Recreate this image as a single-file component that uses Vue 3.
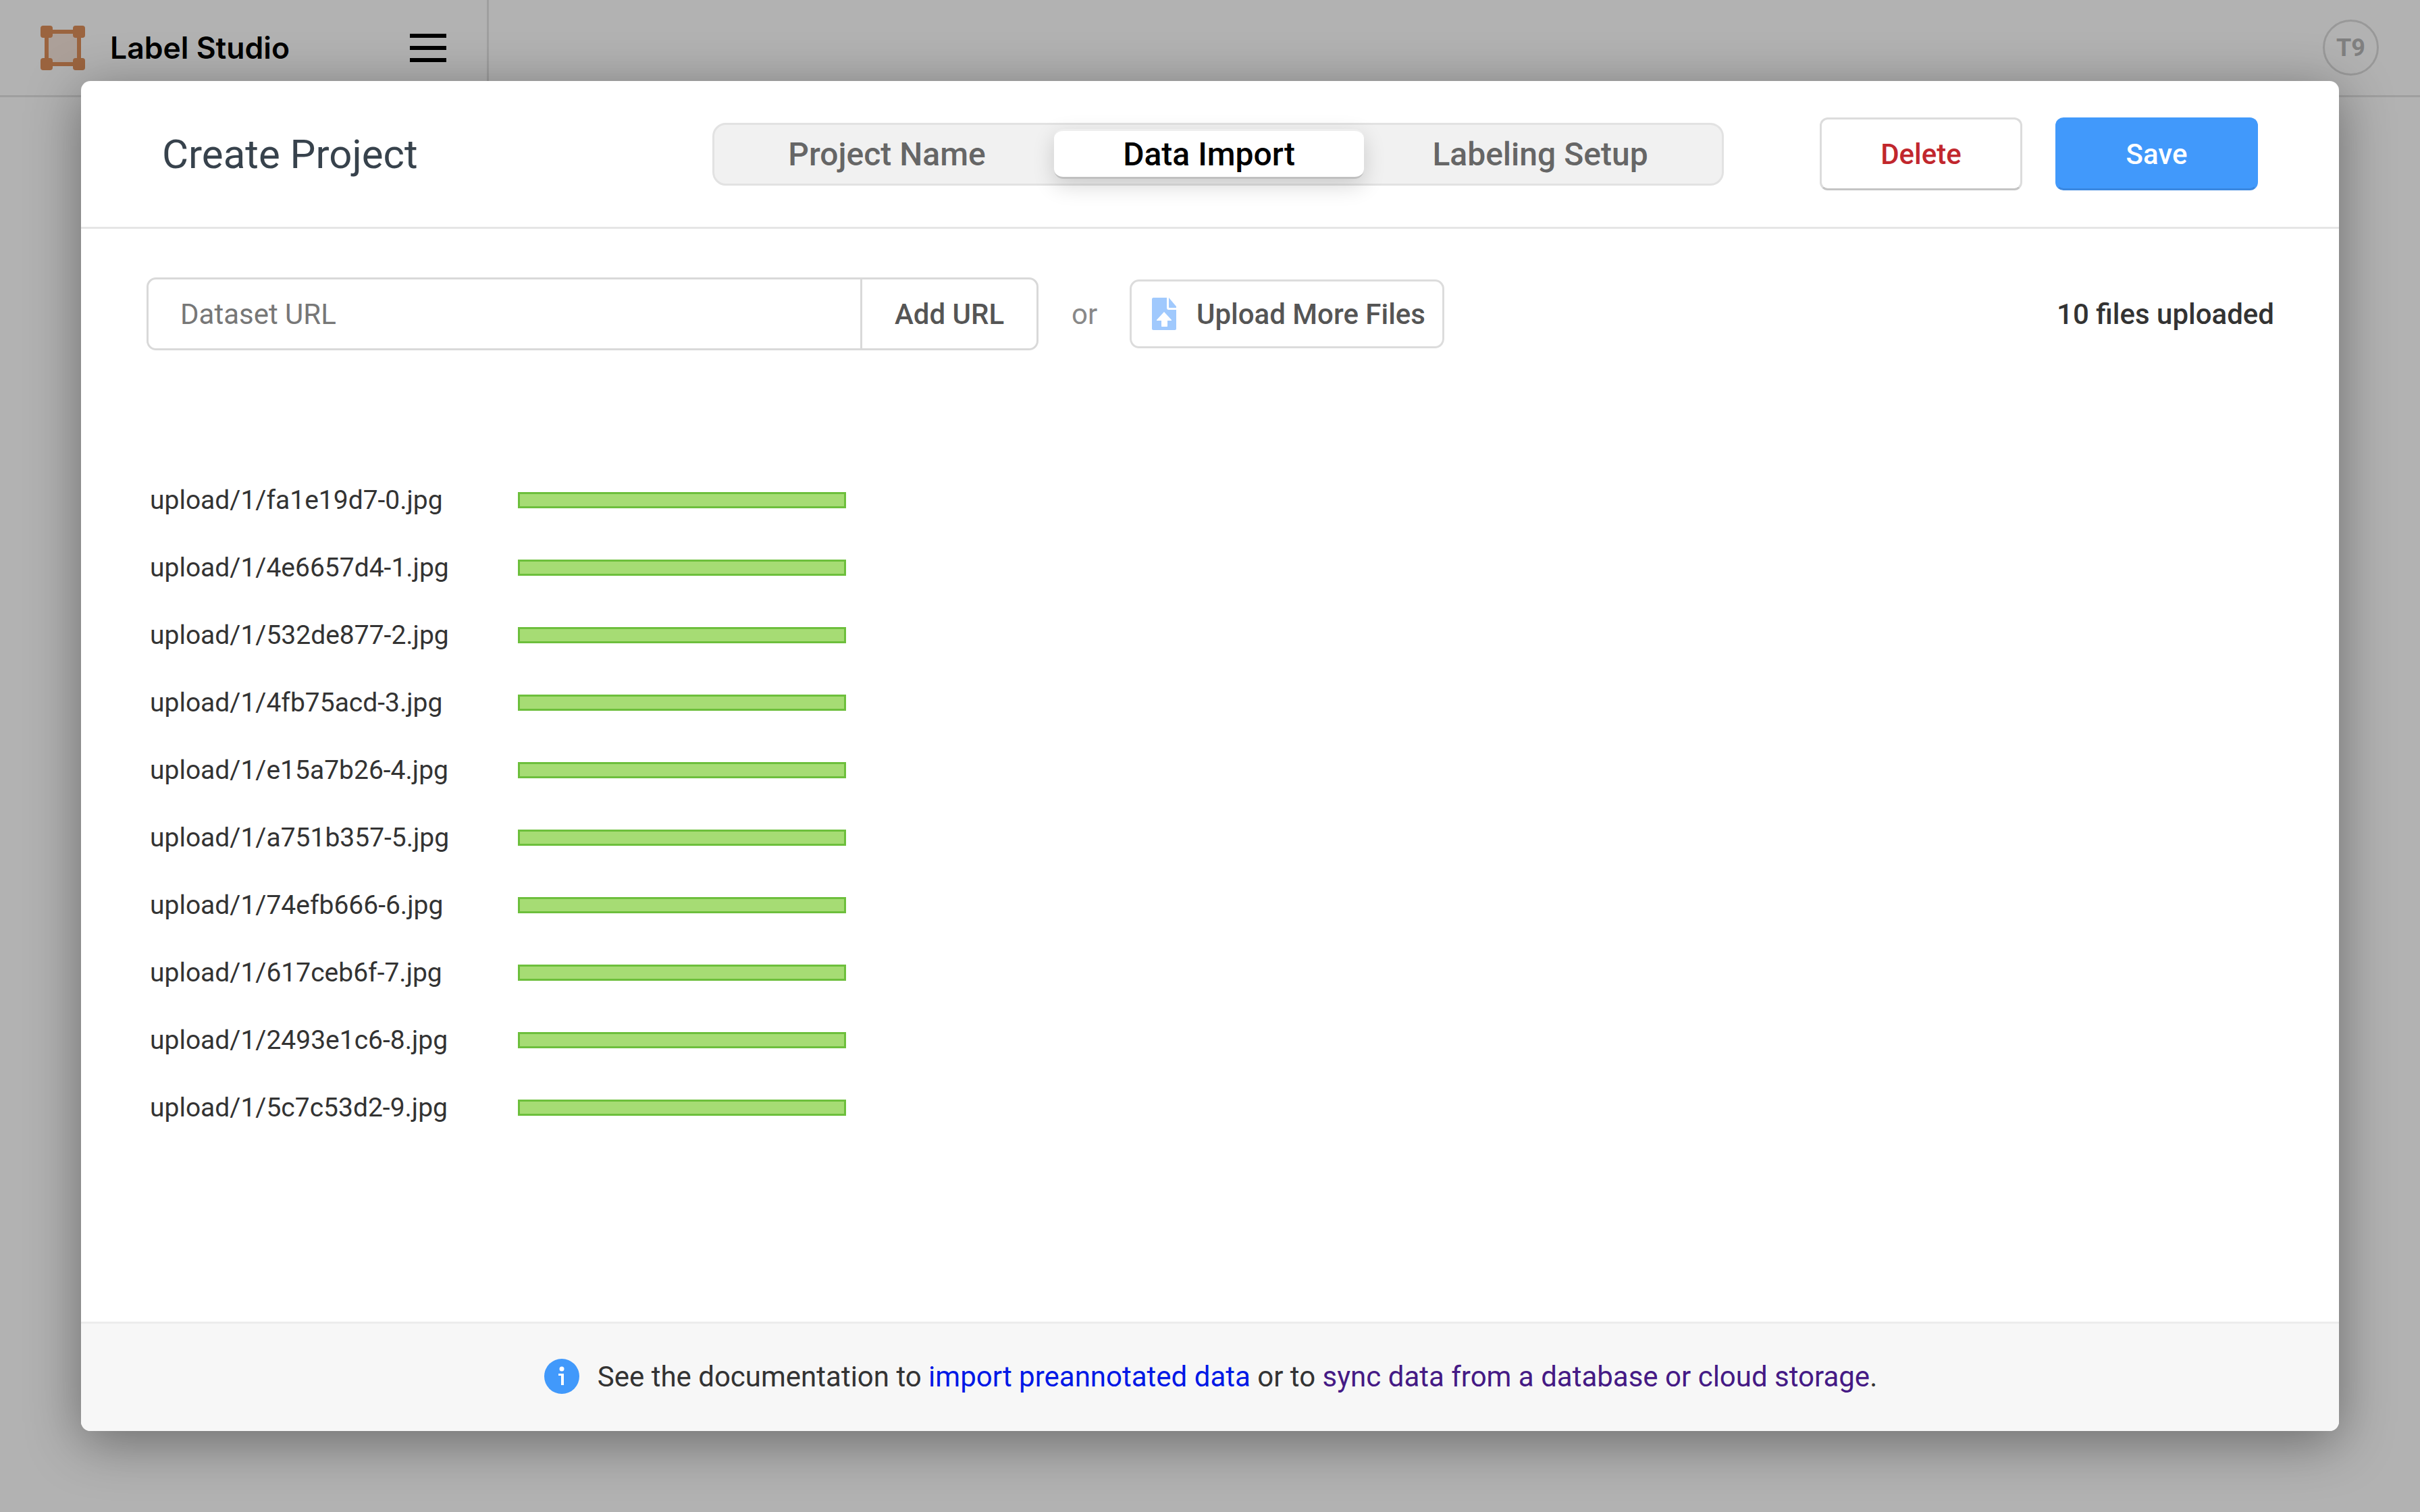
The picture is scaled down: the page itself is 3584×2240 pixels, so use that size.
<template>
  <div class="app">
    <header class="topbar">
      <div class="brand">
        <svg class="logo" viewBox="0 0 66 66" width="66" height="66">
          <rect x="9" y="9" width="48" height="48" fill="#f7e5dc" stroke="#df905b" stroke-width="6" />
          <rect x="0" y="0" width="18" height="18" rx="4" fill="#df905b" />
          <rect x="48" y="0" width="18" height="18" rx="4" fill="#df905b" />
          <rect x="0" y="48" width="18" height="18" rx="4" fill="#df905b" />
          <rect x="48" y="48" width="18" height="18" rx="4" fill="#df905b" />
        </svg>
        <span class="brand-name">Label Studio</span>
        <button class="menu-btn">
          <span></span><span></span><span></span>
        </button>
      </div>
      <div class="avatar">T9</div>
    </header>

    <div class="overlay">
      <div class="modal">
        <div class="modal-head">
          <h1>Create Project</h1>
          <div class="tabs">
            <div v-for="t in tabs" :key="t" class="tab" :class="{ active: t === 'Data Import' }">{{ t }}</div>
          </div>
          <div class="actions">
            <button class="btn">Delete</button>
            <button class="btn primary">Save</button>
          </div>
        </div>

        <div class="modal-body">
          <div class="import-bar">
            <div class="url-form">
              <div class="url-input">Dataset URL</div>
              <div class="url-add">Add URL</div>
            </div>
            <span class="or">or</span>
            <button class="upload-btn">
              <svg viewBox="0 0 36 48" width="36" height="48">
                <path d="M2 0H22V15C22 17 23 18 25 18H36V46C36 47 35 48 34 48H2C1 48 0 47 0 46V2C0 1 1 0 2 0Z" fill="#a0c9fd" />
                <path d="M25 0L36 13V15H26C25.500 15 25 14.500 25 14Z" fill="#a0c9fd" />
                <path d="M18 21L29 33V34H23V42C23 42.600 22.600 43 22 43H15C14.400 43 14 42.600 14 42V34H7V33Z" fill="#fff" />
              </svg>
              Upload More Files
            </button>
            <span class="count">{{ files.length }} files uploaded</span>
          </div>

          <div class="files">
            <div v-for="f in files" :key="f" class="file">
              <span class="file-name">{{ f }}</span>
              <div class="bar"></div>
            </div>
          </div>
        </div>

        <div class="modal-foot">
          <svg viewBox="0 0 52 52" width="52" height="52">
            <circle cx="26" cy="26" r="26" fill="#4199fb" />
            <circle cx="26" cy="15" r="3.500" fill="#fff" />
            <path d="M21 22H29V39H25V25H21Z" fill="#fff" />
          </svg>
          <span class="foot-text">See the documentation to <a href="#" class="l1">import preannotated data</a> or to <a href="#" class="l2">sync data from a database or cloud storage</a>.</span>
        </div>
      </div>
    </div>
  </div>
</template>

<script setup>
const tabs = ['Project Name', 'Data Import', 'Labeling Setup'];
const files = [
  'upload/1/fa1e19d7-0.jpg',
  'upload/1/4e6657d4-1.jpg',
  'upload/1/532de877-2.jpg',
  'upload/1/4fb75acd-3.jpg',
  'upload/1/e15a7b26-4.jpg',
  'upload/1/a751b357-5.jpg',
  'upload/1/74efb666-6.jpg',
  'upload/1/617ceb6f-7.jpg',
  'upload/1/2493e1c6-8.jpg',
  'upload/1/5c7c53d2-9.jpg',
];
</script>

<style>
html, body {
  margin: 0;
  background: #fff;
}
</style>

<style scoped>
.app {
  width: 3584px;
  height: 2240px;
  position: relative;
  overflow: hidden;
  font-family: Roboto, "Liberation Sans", sans-serif;
}

.topbar {
  height: 144px;
  box-sizing: border-box;
  border-bottom: 3px solid #e4e4e4;
  display: flex;
  align-items: center;
  justify-content: space-between;
  padding: 0 61px 0 60px;
}

.brand {
  display: flex;
  align-items: center;
  height: 141px;
  width: 661px;
  border-right: 3px solid #e4e4e4;
}

.brand-name {
  font-family: Inter, sans-serif;
  font-size: 44.500px;
  font-weight: 600;
  color: #000;
  margin-left: 37px;
  white-space: nowrap;
}

.menu-btn {
  margin-left: auto;
  margin-right: 60px;
  width: 54px;
  padding: 0;
  border: 0;
  background: none;
  display: flex;
  flex-direction: column;
  gap: 12px;
}

.menu-btn span {
  display: block;
  height: 6px;
  background: #000;
}

.avatar {
  width: 83px;
  height: 83px;
  box-sizing: border-box;
  border: 3px solid #dcdcdc;
  border-radius: 50%;
  display: flex;
  align-items: center;
  justify-content: center;
  font-size: 36px;
  font-weight: 700;
  color: #b8b8b8;
}

.overlay {
  position: absolute;
  inset: 0;
  background: rgba(0, 0, 0, 0.3);
  padding: 120px;
  box-sizing: border-box;
}

.modal {
  height: 2000px;
  background: #fff;
  border-radius: 14px;
  box-shadow: 0 16px 80px rgba(0, 0, 0, 0.4);
  display: flex;
  flex-direction: column;
  overflow: hidden;
}

.modal-head {
  height: 219px;
  flex: none;
  box-sizing: border-box;
  border-bottom: 3px solid #e5e5e5;
  display: flex;
  align-items: center;
  padding: 0 120px;
  position: relative;
}

.modal-head h1 {
  margin: 0;
  width: 815px;
  font-size: 60px;
  font-weight: 400;
  color: #37424c;
  white-space: nowrap;
}

.tabs {
  width: 1498px;
  height: 93px;
  box-sizing: border-box;
  border: 3px solid #e2e2e2;
  border-radius: 20px;
  background: #f1f1f1;
  display: flex;
  align-items: center;
  padding: 0 3px;
}

.tab {
  height: 74px;
  display: flex;
  align-items: center;
  justify-content: center;
  font-size: 48px;
  font-weight: 500;
  color: #666;
  white-space: nowrap;
}

.tab:first-child {
  width: 500px;
  box-sizing: border-box;
  padding-left: 5px;
}

.tab:last-child {
  flex: 1;
  padding-right: 5px;
}

.tab.active {
  flex: none;
  width: 459px;
  box-sizing: border-box;
  background: #fff;
  color: #000;
  border-radius: 14px;
  border-top: 3px solid #eee;
  border-bottom: 3px solid #c0c0c0;
  box-shadow: 0 10px 32px rgba(0, 0, 0, 0.16);
}

.actions {
  margin-left: auto;
  display: flex;
  gap: 49px;
}

.btn {
  width: 300px;
  height: 108px;
  box-sizing: border-box;
  background: #fff;
  border: 3px solid #dcdcdc;
  border-bottom-color: #c4c4c4;
  border-radius: 12px;
  font-family: inherit;
  font-size: 42px;
  font-weight: 500;
  color: #c1272d;
}

.btn.primary {
  background: #4199fb;
  border-color: #4199fb;
  border-bottom-color: #3a87e0;
  color: #fff;
}

.modal-body {
  flex: 1;
  padding: 72px 96px 0 97px;
}

.import-bar {
  display: flex;
  align-items: center;
}

.url-form {
  display: flex;
  width: 1321px;
  height: 108px;
  box-sizing: border-box;
  border: 3px solid #d9d9d9;
  border-radius: 14px;
}

.url-input {
  width: 1057px;
  box-sizing: border-box;
  padding-left: 47px;
  border-right: 3px solid #d9d9d9;
  display: flex;
  align-items: center;
  font-size: 42px;
  color: #777;
}

.url-add {
  flex: 1;
  display: flex;
  align-items: center;
  justify-content: center;
  font-size: 42px;
  font-weight: 500;
  color: #555;
}

.or {
  margin-left: 49px;
  width: 86px;
  font-size: 42px;
  color: #888;
}

.upload-btn {
  width: 466px;
  height: 102px;
  box-sizing: border-box;
  background: #fff;
  border: 3px solid #dcdcdc;
  border-radius: 14px;
  display: flex;
  align-items: center;
  gap: 30px;
  padding: 0 0 0 30px;
  font-family: inherit;
  font-size: 42px;
  font-weight: 500;
  color: #555;
  white-space: nowrap;
}

.count {
  margin-left: auto;
  font-size: 42px;
  font-weight: 500;
  color: #333;
}

.files {
  margin-top: 192px;
  display: flex;
  flex-direction: column;
  gap: 40px;
}

.file {
  display: flex;
  align-items: center;
  height: 60px;
}

.file-name {
  width: 545px;
  padding-left: 5px;
  font-size: 39px;
  color: #333;
  white-space: nowrap;
}

.bar {
  width: 486px;
  height: 24px;
  box-sizing: border-box;
  background: #a6dc74;
  border: 3px solid #6dbf3c;
}

.modal-foot {
  height: 162px;
  flex: none;
  box-sizing: border-box;
  border-top: 3px solid #ececec;
  background: #f7f7f7;
  display: flex;
  align-items: center;
  justify-content: center;
  gap: 27px;
  padding: 0 0 3px 2px;
}

.foot-text {
  font-size: 42px;
  color: #333;
}

.l1 {
  color: #0018e6;
  text-decoration: none;
}

.l2 {
  color: #451a85;
  text-decoration: none;
}
</style>
